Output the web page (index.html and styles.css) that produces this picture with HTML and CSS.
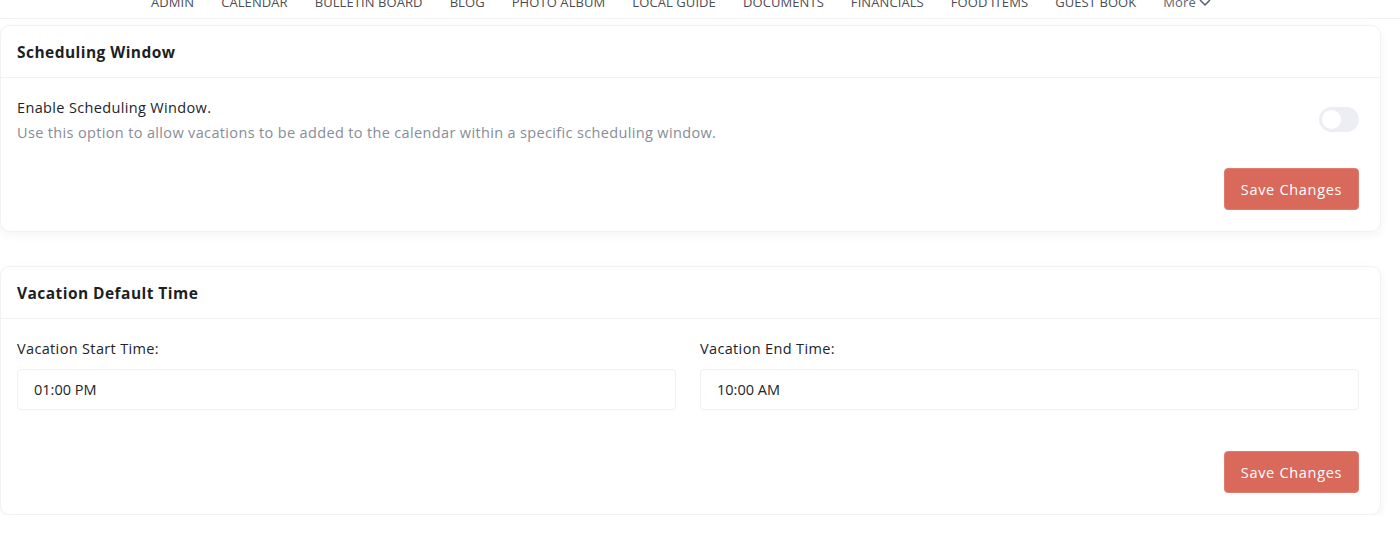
FILE: index.html
```html
<!DOCTYPE html>
<html lang="en">
<head>
<meta charset="utf-8">
<title>Settings</title>
<link rel="stylesheet" href="styles.css">
</head>
<body>
<nav class="topnav">
  <a class="nav-item">ADMIN</a>
  <a class="nav-item">CALENDAR</a>
  <a class="nav-item">BULLETIN BOARD</a>
  <a class="nav-item">BLOG</a>
  <a class="nav-item">PHOTO ALBUM</a>
  <a class="nav-item">LOCAL GUIDE</a>
  <a class="nav-item">DOCUMENTS</a>
  <a class="nav-item">FINANCIALS</a>
  <a class="nav-item">FOOD ITEMS</a>
  <a class="nav-item">GUEST BOOK</a>
  <a class="nav-item more">More <svg class="chev" width="12" height="8" viewBox="0 0 12 8"><path d="M1.5 1.5 6 6l4.5-4.5" fill="none" stroke="currentColor" stroke-width="1.6" stroke-linecap="round" stroke-linejoin="round"/></svg></a>
</nav>

<main class="page">
  <section class="card card-sched">
    <header class="card-header">Scheduling Window</header>
    <div class="card-body">
      <div class="option-row">
        <div class="option-text">
          <div class="option-title">Enable Scheduling Window.</div>
          <div class="option-desc">Use this option to allow vacations to be added to the calendar within a specific scheduling window.</div>
        </div>
        <span class="toggle"><span class="knob"></span></span>
      </div>
      <div class="actions actions-sched">
        <button class="btn-save">Save Changes</button>
      </div>
    </div>
  </section>

  <section class="card card-time">
    <header class="card-header">Vacation Default Time</header>
    <div class="card-body">
      <div class="field-grid">
        <label class="field">
          <span class="field-label">Vacation Start Time:</span>
          <span class="field-input">01:00 PM</span>
        </label>
        <label class="field">
          <span class="field-label">Vacation End Time:</span>
          <span class="field-input">10:00 AM</span>
        </label>
      </div>
      <div class="actions actions-time">
        <button class="btn-save">Save Changes</button>
      </div>
    </div>
  </section>
</main>
</body>
</html>
```

FILE: styles.css
```css
* { box-sizing: border-box; }
html, body { margin: 0; padding: 0; background: #ffffff; }
body {
  font-family: "Open Sans", "Liberation Sans", sans-serif;
  color: #222429;
  overflow: hidden;
}

.topnav {
  display: flex;
  align-items: center;
  gap: 27px;
  height: 19px;
  padding-left: 151px;
  border-bottom: 1px solid #f1f2f4;
}
.nav-item {
  margin-top: -14px;
  font-size: 13px;
  line-height: 18px;
  letter-spacing: 0.08px;
  color: #4a4d55;
  text-decoration: none;
  white-space: nowrap;
}
.nav-item.more {
  color: #5d6473;
  display: inline-flex;
  align-items: center;
  gap: 3px;
}
.chev { margin-top: 1px; }

.page {
  width: 1381px;
  padding-top: 6px;
}

.card {
  background: #fff;
  border: 1px solid #f1f2f5;
  border-radius: 10px;
  box-shadow: 0 3px 10px rgba(20, 30, 60, 0.05);
}
.card-time { margin-top: 34px; }

.card-header {
  height: 52px;
  display: flex;
  align-items: center;
  padding: 0 16px;
  font-size: 15.5px;
  font-weight: 700;
  letter-spacing: 0.45px;
  color: #1d1f24;
  border-bottom: 1px solid #f1f2f5;
}

.card-body {
  padding: 19px 21px 21px 16px;
}

.option-row {
  display: flex;
  justify-content: space-between;
  align-items: flex-start;
}
.option-title,
.option-desc,
.field-label,
.field-input {
  font-size: 14.5px;
  letter-spacing: 0.35px;
}
.option-title {
  line-height: 22px;
  color: #222429;
}
.option-desc {
  margin-top: 3px;
  line-height: 22px;
  color: #878c99;
}

.toggle {
  margin-top: 10px;
  width: 40px;
  height: 25px;
  border-radius: 13px;
  background: #eceef4;
  display: flex;
  align-items: center;
  padding-left: 3px;
}
.knob {
  width: 19px;
  height: 19px;
  border-radius: 50%;
  background: #fff;
}

.actions {
  display: flex;
  justify-content: flex-end;
}
.actions-sched { margin-top: 24px; }
.actions-time { margin-top: 41px; }

.btn-save {
  height: 42px;
  width: 135px;
  border: 1px solid #e07c6d;
  border-radius: 4px;
  background: #d9695a;
  color: #fff;
  font-family: inherit;
  font-size: 14.5px;
  letter-spacing: 0.7px;
  cursor: pointer;
}

.field-grid {
  display: grid;
  grid-template-columns: 1fr 1fr;
  gap: 24px;
}
.field {
  display: flex;
  flex-direction: column;
}
.field-label {
  line-height: 22px;
  color: #222429;
}
.field-input {
  margin-top: 9px;
  height: 41px;
  display: flex;
  align-items: center;
  padding: 0 16px;
  border: 1px solid #eef0f3;
  border-radius: 4px;
  color: #222429;
  letter-spacing: 0;
}
```
